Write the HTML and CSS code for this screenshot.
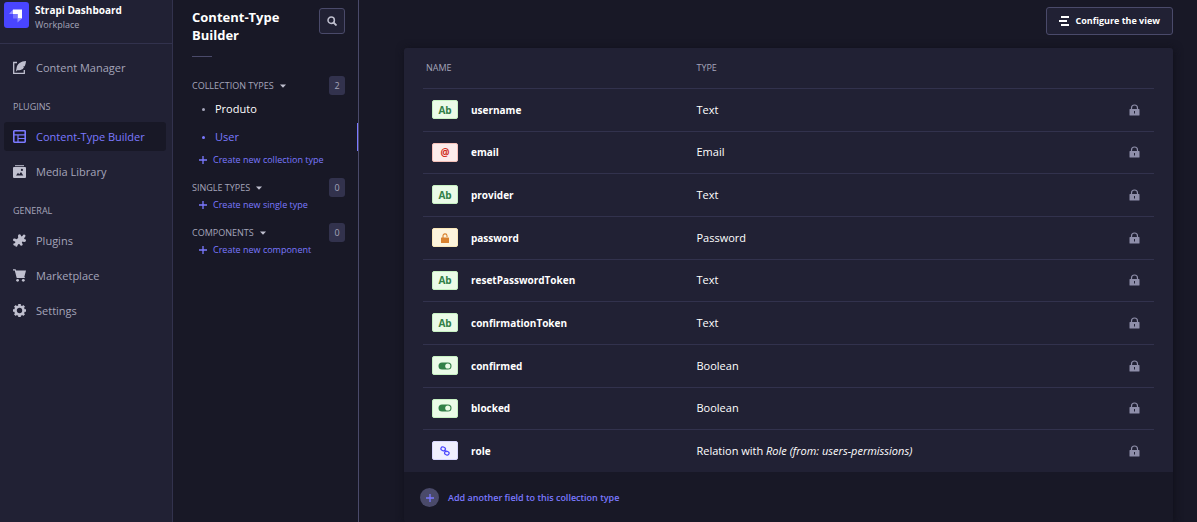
FILE: index.html
```html
<!DOCTYPE html>
<html lang="en">
<head>
<meta charset="utf-8">
<title>Content-Type Builder</title>
<link rel="stylesheet" href="styles.css">
</head>
<body>
<svg class="defs" aria-hidden="true">
  <symbol id="lock" viewBox="0 0 11 12"><path d="M2.5 5V4a3 3 0 0 1 6 0v1" fill="none" stroke="currentColor" stroke-width="1.2"/><path fill="currentColor" fill-rule="evenodd" d="M1 5h9q.5 0 .5.500v5.500q0 .5-.5.5H1q-.5 0-.5-.5V5.500Q.5 5 1 5zM5 7v2.500h1V7z"/></symbol>
  <symbol id="plus" viewBox="0 0 10 10"><path d="M5 1v8M1 5h8" fill="none" stroke="currentColor" stroke-width="1.300"/></symbol>
  <symbol id="caret" viewBox="0 0 6 4"><path d="M0 .5h6L3 3.700z" fill="currentColor"/></symbol>
  <symbol id="toggle" viewBox="0 0 14 8"><rect x=".5" y=".5" width="13" height="7" rx="3.500" fill="currentColor"/><circle cx="9.800" cy="4" r="2.600" fill="#eafbe7"/></symbol>
</svg>
<div class="app">
  <nav class="sidebar" aria-label="Main">
    <div class="brand">
      <svg class="brand-logo" viewBox="0 0 25 26"><rect width="25" height="26" rx="3" fill="#4945ff"/><path d="M9 7.500h9v9h-4.500V12H9z" fill="#fff"/><path d="M9 7.500V12H5zM13.500 16.500H18l-4.500 4z" fill="#9593ff"/><path d="M9 12h4.500v4.500h-4q-.5 0-.5-.5z" fill="#7774ff"/></svg>
      <div>
        <div class="brand-name">Strapi Dashboard</div>
        <div class="brand-sub">Workplace</div>
      </div>
    </div>
    <div class="menu">
      <a class="menu-link" href="#"><svg viewBox="0 0 13 13"><path d="M4 1.500H.7v10.800h10.600V9" fill="none" stroke="currentColor" stroke-width="1.300"/><path d="M13 0C8 .2 4 2.500 3.500 7.500L2.800 10.800l1.500-1.600C9 9.500 10.500 7.500 11 6l-1.200-.2 1.900-.6C12.500 3.500 12.800 2 13 0z" fill="currentColor"/></svg>Content Manager</a>
      <h2 class="menu-title">PLUGINS</h2>
      <a class="menu-link active" href="#" aria-current="page"><svg viewBox="0 0 13 13"><rect x=".8" y=".8" width="11.400" height="11.400" rx=".6" fill="none" stroke="currentColor" stroke-width="1.600"/><path d="M1 4.800h11M5 5v7M5 8.500h7" stroke="currentColor" stroke-width="1.200"/></svg>Content-Type Builder</a>
      <a class="menu-link" href="#"><svg viewBox="0 0 13 13"><path d="M2 .2h9v1H2z" fill="currentColor"/><path fill="currentColor" d="M1 2h11q1 0 1 1v9q0 1-1 1H1q-1 0-1-1V3q0-1 1-1z"/><path d="M3 10.500 5 7.800l1.200 1.400L8 7l2.300 3.500z" fill="#212134"/><circle cx="8.900" cy="4.900" r="1.100" fill="#212134"/></svg>Media Library</a>
      <h2 class="menu-title">GENERAL</h2>
      <a class="menu-link" href="#"><svg viewBox="0 0 13 13"><path fill="currentColor" d="M5 1.800Q5 .3 6.500.3T8 2l.8.500L10 1.200Q10.500 0 11.800.7T12 3l-1 1.200.7 1Q13 5 13 6.600T11 8L9.500 7.600l-.7 1 .8 1.400q.4 1.600-1.200 1.700T6.700 10.300L5.500 10l-1 1.200Q4.700 12.500 3.500 12.800T2.300 11.500Q.5 12 .3 10.500T1.800 9.200L2.500 8 1.500 7.200Q0 7.200 0 5.700T2 4.500l1.500.8L5.200 4z"/></svg>Plugins</a>
      <a class="menu-link" href="#"><svg viewBox="0 0 13 13"><path d="M0 .8h2.200l2 7.700h7.600" fill="none" stroke="currentColor" stroke-width="1.200"/><path d="M2.500 1.500H13L11.300 8H4z" fill="currentColor"/><circle cx="4.600" cy="11.300" r="1.400" fill="currentColor"/><circle cx="10.300" cy="11.300" r="1.400" fill="currentColor"/></svg>Marketplace</a>
      <a class="menu-link" href="#"><svg viewBox="0 0 13 13"><circle cx="6.500" cy="6.500" r="4" fill="none" stroke="currentColor" stroke-width="2.600"/><path d="M6.500 0v2M6.500 11v2M0 6.500h2M11 6.500h2M1.900 1.900l1.400 1.400M9.700 9.700l1.400 1.400M11.100 1.900 9.700 3.300M3.300 9.700l-1.400 1.400" stroke="currentColor" stroke-width="2.600"/></svg>Settings</a>
    </div>
  </nav>

  <aside class="subnav">
    <header class="subnav-head">
      <h1>Content-Type Builder</h1>
      <button class="search" type="button" aria-label="Search"><svg viewBox="0 0 10 10"><circle cx="4.200" cy="4.200" r="3.200" fill="none" stroke="currentColor" stroke-width="1.500"/><path d="M6.500 6.500 9.500 9.500" stroke="currentColor" stroke-width="1.800"/></svg></button>
    </header>
    <hr class="rule">
    <section class="group">
      <div class="group-head"><button type="button" aria-expanded="true">COLLECTION TYPES<svg><use href="#caret"/></svg></button><span class="count">2</span></div>
      <ul class="types">
        <li><a href="#">Produto</a></li>
        <li><a class="active" href="#" aria-current="page">User</a></li>
      </ul>
      <button class="create" type="button"><svg><use href="#plus"/></svg>Create new collection type</button>
    </section>
    <section class="group">
      <div class="group-head"><button type="button" aria-expanded="true">SINGLE TYPES<svg><use href="#caret"/></svg></button><span class="count">0</span></div>
      <button class="create" type="button"><svg><use href="#plus"/></svg>Create new single type</button>
    </section>
    <section class="group">
      <div class="group-head"><button type="button" aria-expanded="true">COMPONENTS<svg><use href="#caret"/></svg></button><span class="count">0</span></div>
      <button class="create" type="button"><svg><use href="#plus"/></svg>Create new component</button>
    </section>
  </aside>

  <main class="content">
    <div class="actions">
      <button class="configure" type="button"><svg viewBox="0 0 10 10"><path d="M2 1h8M0 5h8M2 9h8" stroke="currentColor" stroke-width="2"/></svg>Configure the view</button>
    </div>
    <div class="card">
      <div class="table-wrap">
        <table class="fields">
          <thead><tr><th class="col-name" scope="col">NAME</th><th scope="col">TYPE</th><td class="col-lock"></td></tr></thead>
          <tbody>
            <tr><td><div class="field"><span class="tag green">Ab</span>username</div></td><td>Text</td><td class="col-lock"><svg><use href="#lock"/></svg></td></tr>
            <tr><td><div class="field"><span class="tag red">@</span>email</div></td><td>Email</td><td class="col-lock"><svg><use href="#lock"/></svg></td></tr>
            <tr><td><div class="field"><span class="tag green">Ab</span>provider</div></td><td>Text</td><td class="col-lock"><svg><use href="#lock"/></svg></td></tr>
            <tr><td><div class="field"><span class="tag orange"><svg class="unlock" viewBox="0 0 8 10"><path d="M2 5V3a2 2 0 0 1 4-.3V4" fill="none" stroke="currentColor" stroke-width="1.100"/><rect y="4.500" width="8" height="5.500" rx=".5" fill="currentColor"/></svg></span>password</div></td><td>Password</td><td class="col-lock"><svg><use href="#lock"/></svg></td></tr>
            <tr><td><div class="field"><span class="tag green">Ab</span>resetPasswordToken</div></td><td>Text</td><td class="col-lock"><svg><use href="#lock"/></svg></td></tr>
            <tr><td><div class="field"><span class="tag green">Ab</span>confirmationToken</div></td><td>Text</td><td class="col-lock"><svg><use href="#lock"/></svg></td></tr>
            <tr><td><div class="field"><span class="tag green"><svg class="toggle"><use href="#toggle"/></svg></span>confirmed</div></td><td>Boolean</td><td class="col-lock"><svg><use href="#lock"/></svg></td></tr>
            <tr><td><div class="field"><span class="tag green"><svg class="toggle"><use href="#toggle"/></svg></span>blocked</div></td><td>Boolean</td><td class="col-lock"><svg><use href="#lock"/></svg></td></tr>
            <tr><td><div class="field"><span class="tag violet"><svg class="chain" viewBox="0 0 10 10"><g fill="none" stroke="currentColor" stroke-width="1.200"><rect x=".8" y="1" width="4.600" height="3.600" rx="1.800" transform="rotate(25 3 3)"/><rect x="4.600" y="5.400" width="4.600" height="3.600" rx="1.800" transform="rotate(25 7 7)"/><path d="M4 4l2.500 2"/></g></svg></span>role</div></td><td>Relation with <em>Role (from: users-permissions)</em></td><td class="col-lock"><svg><use href="#lock"/></svg></td></tr>
          </tbody>
        </table>
      </div>
      <button class="add-field" type="button"><span class="add-icon"><svg><use href="#plus"/></svg></span>Add another field to this collection type</button>
    </div>
  </main>
</div>
</body>
</html>
```
FILE: styles.css
```css
* { box-sizing: border-box; }

body {
  margin: 0;
  background: #181826;
  color: #fff;
  font: 11px/16px "Open Sans", "Noto Sans", sans-serif;
}

h1, h2, ul { margin: 0; padding: 0; }
ul { list-style: none; }
a { color: inherit; text-decoration: none; }
svg { display: block; flex: none; }
.defs { position: absolute; width: 0; height: 0; }

button {
  display: flex;
  align-items: center;
  margin: 0;
  padding: 0;
  border: 0;
  background: none;
  color: inherit;
  font: inherit;
  white-space: nowrap;
  cursor: pointer;
}

.app { display: flex; min-height: 100vh; }

/* Main navigation */
.sidebar {
  flex: none;
  width: 173px;
  background: #212134;
  border-right: 1px solid #32324d;
}

.brand {
  display: flex;
  gap: 6px;
  height: 44px;
  padding: 2px 4px;
  border-bottom: 1px solid #32324d;
}
.brand-logo { width: 25px; height: 26px; }
.brand-name { font-size: 10px; font-weight: 700; }
.brand-sub { color: #a5a5ba; font-size: 9px; line-height: 13px; }

.menu { padding: 9px 6px 0 4px; }
.menu-link {
  display: flex;
  align-items: center;
  gap: 10px;
  height: 29px;
  margin-bottom: 6px;
  padding: 0 9px;
  border-radius: 3px;
  color: #a5a5ba;
  white-space: nowrap;
}
.menu-link svg { width: 13px; height: 13px; color: #c0c0cf; }
.menu-link.active { background: #181826; color: #7b79ff; font-weight: 500; }
.menu-link.active svg { color: #7b79ff; }
.menu-title {
  padding: 11px 9px 8px;
  color: #a5a5ba;
  font-size: 9px;
  font-weight: 500;
  line-height: 15px;
}

/* Content-type navigation */
.subnav {
  flex: none;
  width: 186px;
  border-right: 1px solid #4a4a6a;
}
.subnav-head {
  display: flex;
  justify-content: space-between;
  align-items: flex-start;
  padding: 8px 13px 0 19px;
}
.subnav h1 { width: 100px; font-size: 13px; font-weight: 700; line-height: 18px; }
.search {
  justify-content: center;
  width: 26px;
  height: 26px;
  border: 1px solid #4a4a6a;
  border-radius: 3px;
  background: #212134;
  color: #c0c0cf;
}
.search svg { width: 10px; height: 10px; }
.rule {
  width: 20px;
  height: 1px;
  margin: 12px 0 19px 19px;
  border: 0;
  background: #4a4a6a;
}
.group { margin-bottom: 12px; }
.group-head {
  display: flex;
  justify-content: space-between;
  align-items: center;
  padding: 0 13px 0 19px;
  color: #a5a5ba;
  font-size: 9px;
}
.group-head button { gap: 6px; }
.group-head svg { width: 6px; height: 4px; color: #c0c0cf; }
.count {
  width: 16px;
  border-radius: 3px;
  background: #32324d;
  line-height: 19px;
  text-align: center;
}
.types { padding-bottom: 1px; }
.types a {
  display: flex;
  align-items: center;
  gap: 10px;
  height: 28px;
  padding-left: 29px;
}
.types a::before {
  width: 3px;
  height: 3px;
  border-radius: 50%;
  background: #a5a5ba;
  content: "";
}
.types a.active { border-right: 1px solid #7b79ff; color: #7b79ff; font-weight: 500; }
.types a.active::before { background: #7b79ff; }
.create {
  gap: 5px;
  margin: 1px 0 0 25px;
  color: #7b79ff;
  font-size: 9px;
  line-height: 13px;
}
.create svg { width: 10px; height: 10px; }

/* Content area */
.content { flex: 1; min-width: 0; padding: 7px 24px 4px 45px; }
.actions { display: flex; justify-content: flex-end; margin-bottom: 13px; }
.configure {
  gap: 6px;
  height: 28px;
  padding: 0 12px;
  border: 1px solid #4a4a6a;
  border-radius: 3px;
  background: #212134;
  font-size: 9px;
  font-weight: 700;
}
.configure svg { width: 10px; height: 10px; }

.card { border-radius: 3px; box-shadow: 1px 1px 8px #10101a; }
.table-wrap { padding: 0 19px; border-radius: 3px 3px 0 0; background: #212134; }
.fields { width: 100%; border-collapse: collapse; table-layout: fixed; }
.fields th, .fields td { padding: 0 3px; text-align: left; }
.fields thead th { height: 40px; color: #a5a5ba; font-size: 9px; font-weight: 500; }
.fields tbody tr { height: 43px; border-top: 1px solid #32324d; }
.fields tbody tr:nth-child(3n+2) { height: 42px; }
.fields .col-name { width: 37%; }
.fields .col-lock { width: 48px; padding: 0 14px 0 0; }
.col-lock svg { width: 11px; height: 12px; margin-left: auto; color: #8e8ea9; }

.field { display: flex; align-items: center; gap: 13px; padding-left: 6px; font-size: 10px; font-weight: 700; }
.tag {
  display: flex;
  justify-content: center;
  align-items: center;
  width: 26px;
  height: 19px;
  border: 1px solid;
  border-radius: 2px;
}
.green { border-color: #c6f0c2; background: #eafbe7; color: #328048; }
.red { border-color: #f5c0b8; background: #fcecea; color: #d02b20; }
.orange { border-color: #fae7b9; background: #fdf4dc; color: #d9822f; }
.violet { border-color: #d9d8ff; background: #f0f0ff; color: #4945ff; }
.unlock { width: 8px; height: 10px; }
.toggle { width: 14px; height: 8px; }
.chain { width: 10px; height: 10px; }

.add-field {
  gap: 9px;
  width: 100%;
  padding: 16px;
  color: #7b79ff;
  font-size: 9px;
  font-weight: 600;
  line-height: 13px;
}
.add-icon {
  display: flex;
  justify-content: center;
  align-items: center;
  width: 19px;
  height: 19px;
  border-radius: 50%;
  background: #4a4a6a;
}
.add-icon svg { width: 10px; height: 10px; }
```
